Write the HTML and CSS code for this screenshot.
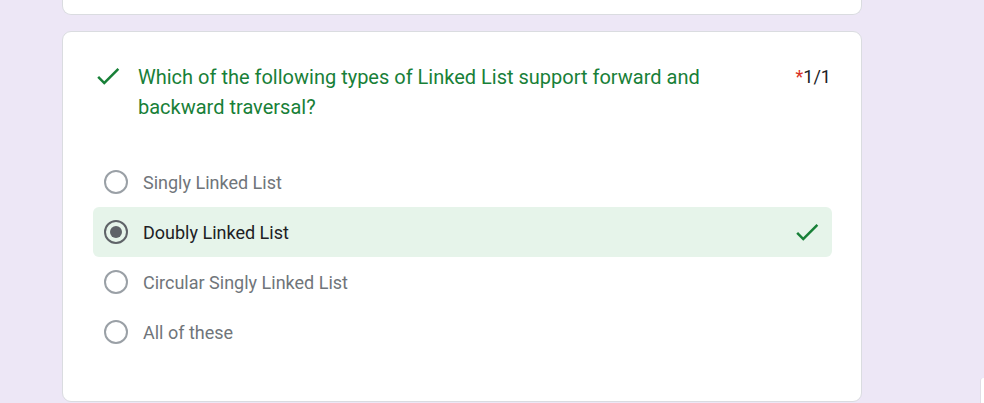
FILE: index.html
```html
<!DOCTYPE html>
<html lang="en">
<head>
<meta charset="utf-8">
<title>Quiz result</title>
<link rel="stylesheet" href="styles.css">
</head>
<body>
<main class="page">
  <div class="card card-prev"></div>
  <section class="card question-card">
    <div class="question-head">
      <svg class="check-icon" viewBox="0 0 24 24" width="30" height="30" aria-hidden="true"><path d="M9 16.17L4.83 12l-1.42 1.41L9 19 21 7l-1.41-1.41z"/></svg>
      <div class="question-title">Which of the following types of Linked List support forward and backward traversal?</div>
      <div class="points"><span class="req">*</span>1/1</div>
    </div>
    <div class="options">
      <div class="option">
        <span class="radio"></span>
        <span class="label">Singly Linked List</span>
      </div>
      <div class="option selected correct">
        <span class="radio"><span class="dot"></span></span>
        <span class="label">Doubly Linked List</span>
        <svg class="check-icon opt-check" viewBox="0 0 24 24" width="30" height="30" aria-hidden="true"><path d="M9 16.17L4.83 12l-1.42 1.41L9 19 21 7l-1.41-1.41z"/></svg>
      </div>
      <div class="option">
        <span class="radio"></span>
        <span class="label">Circular Singly Linked List</span>
      </div>
      <div class="option">
        <span class="radio"></span>
        <span class="label">All of these</span>
      </div>
    </div>
  </section>
  <div class="edge-tab"></div>
</main>
</body>
</html>
```
FILE: styles.css
```css
html, body {
  margin: 0;
  padding: 0;
  background: #ede7f6;
  font-family: Roboto, "Noto Sans", Arial, sans-serif;
}
.page {
  display: flex;
  flex-direction: column;
  gap: 16px;
  padding-left: 62px;
  width: 800px;
  height: 403px;
  overflow: hidden;
}
.card {
  background: #fff;
  border: 1px solid #dadce0;
  border-radius: 9px;
  box-sizing: border-box;
}
.card-prev {
  height: 15px;
  border-top: none;
  border-top-left-radius: 0;
  border-top-right-radius: 0;
  flex: none;
}
.question-card {
  padding: 30px 29px 44px 30px;
  flex: none;
}
.question-head {
  display: flex;
  align-items: flex-start;
}
.check-icon {
  fill: #188038;
  flex: none;
}
.question-head .check-icon {
  margin-top: -1px;
}
.question-title {
  flex: 1;
  margin-left: 15px;
  margin-right: 24px;
  font-size: 20px;
  line-height: 30px;
  color: #188038;
}
.points {
  font-size: 18px;
  line-height: 30px;
  color: #202124;
  margin-right: 1px;
}
.req {
  color: #d93025;
}
.options {
  margin-top: 35px;
  display: flex;
  flex-direction: column;
}
.option {
  height: 50px;
  display: flex;
  align-items: center;
  padding: 0 10px 0 11px;
  border-radius: 6px;
}
.option.correct {
  background: #e6f4ea;
}
.radio {
  width: 24px;
  height: 24px;
  box-sizing: border-box;
  border: 2px solid #9aa0a6;
  border-radius: 50%;
  display: flex;
  align-items: center;
  justify-content: center;
  flex: none;
}
.selected .radio {
  border-color: #5f6368;
}
.dot {
  width: 12px;
  height: 12px;
  border-radius: 50%;
  background: #5f6368;
}
.label {
  margin-left: 15px;
  font-size: 18px;
  color: #70757a;
  flex: 1;
}
.selected .label {
  color: #202124;
}
.edge-tab {
  position: absolute;
  right: 0;
  top: 378px;
  width: 3px;
  height: 25px;
  background: #fff;
  border-left: 1px solid #e0dde6;
  border-top-left-radius: 3px;
}
```
